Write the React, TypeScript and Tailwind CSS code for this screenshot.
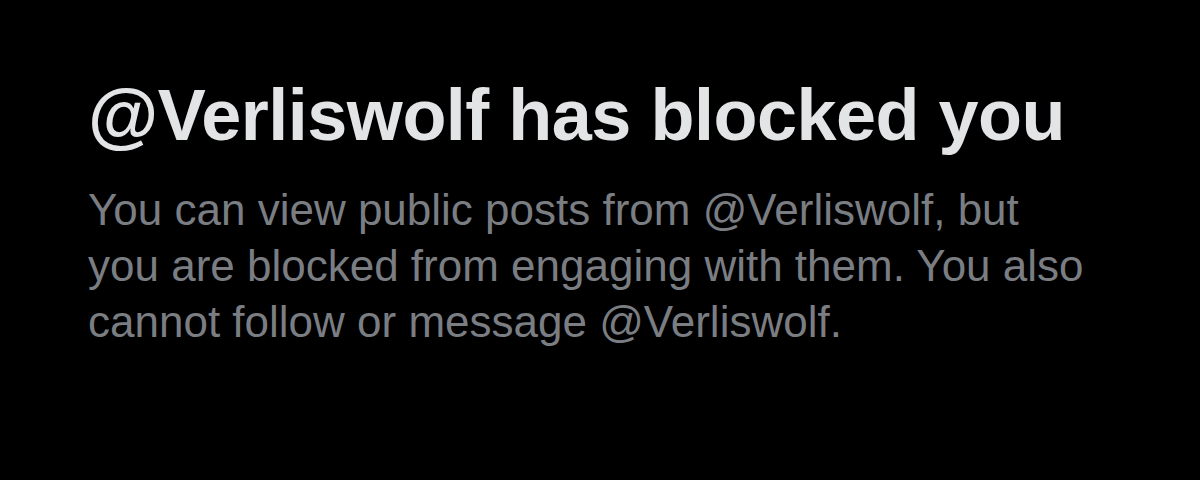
const App = () => {
  return (
    <div className="w-[1200px] h-[480px] bg-black overflow-hidden font-['Liberation_Sans',Arial,sans-serif]">
      <div className="pl-[88px] pt-[72px]">
        <h1 className="text-[72px] leading-[86px] font-bold text-[#e3e4e5] tracking-[-0.5px]">
          @Verliswolf has blocked you
        </h1>
        <p className="mt-[24px] text-[44px] leading-[56px] text-[#7a7e83] whitespace-nowrap">
          You can view public posts from @Verliswolf, but
          <br />
          you are blocked from engaging with them. You also
          <br />
          cannot follow or message @Verliswolf.
        </p>
      </div>
    </div>
  );
};

export default App;
